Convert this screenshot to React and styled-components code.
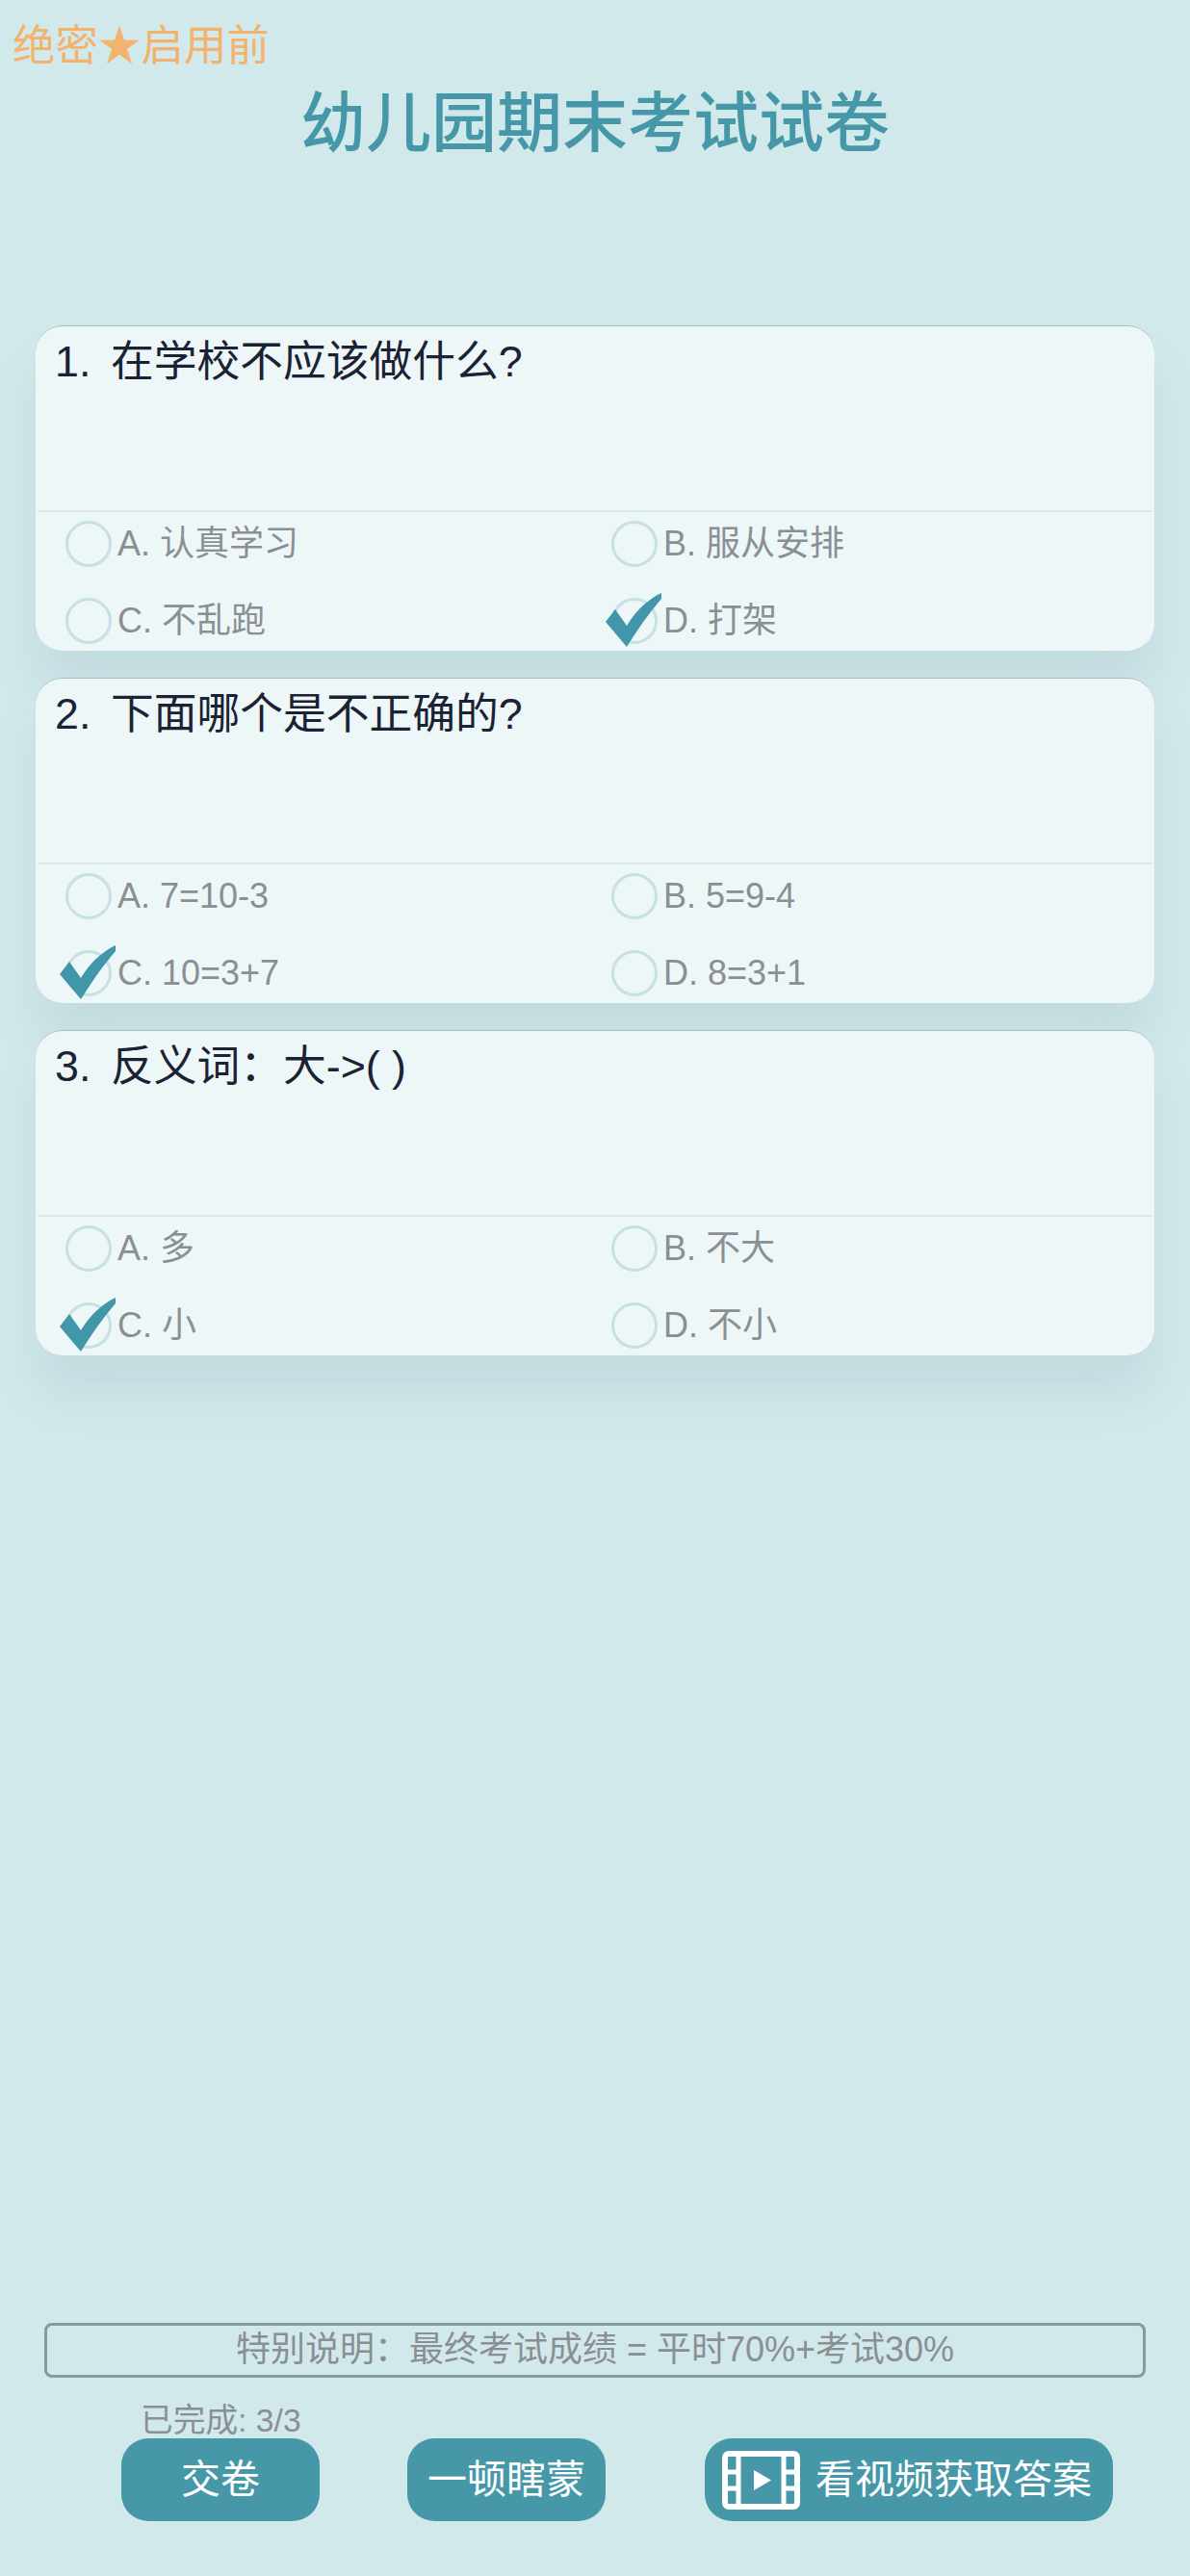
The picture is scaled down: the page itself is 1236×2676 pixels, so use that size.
import React from "react";
import styled, { createGlobalStyle } from "styled-components";

const GlobalStyle = createGlobalStyle`
  html, body {
    margin: 0;
    padding: 0;
    background: #d2e9ec;
  }
  * {
    box-sizing: border-box;
  }
`;

const Page = styled.div`
  width: 1236px;
  height: 2676px;
  display: flex;
  flex-direction: column;
  overflow: hidden;
  background: #d2e9ec;
  font-family: "Liberation Sans", "Noto Sans CJK SC", sans-serif;
`;

const Secret = styled.div`
  height: 44px;
  margin: 26px 0 0 13px;
  font-size: 44.5px;
  line-height: 44px;
  color: #f2b36e;
`;

const Title = styled.h1`
  margin: 16px 0 0;
  height: 84px;
  font-size: 68px;
  line-height: 84px;
  font-weight: 500;
  text-align: center;
  color: #4698a9;
`;

const CardList = styled.div`
  display: flex;
  flex-direction: column;
  gap: 28px;
  margin: 168px 37px 0;
`;

const Card = styled.section`
  height: 338px;
  display: flex;
  flex-direction: column;
  border-radius: 28px;
  border-top: 1px solid #aebfc0;
  background: #eef7f8;
  box-shadow: 0 40px 50px rgba(70, 110, 120, 0.11);
`;

const Question = styled.div`
  height: 193px;
  margin: 0 2px;
  padding: 9px 0 0 18px;
  display: flex;
  font-size: 44.75px;
  line-height: 54px;
  color: #1a2233;
  border-bottom: 2px solid #dde8e9;
`;

const Num = styled.span`
  width: 58px;
  flex: none;
`;

const Options = styled.div`
  display: grid;
  grid-template-columns: 567px 1fr;
  row-gap: 32px;
  padding: 9px 0 0 31px;
`;

const Option = styled.div`
  height: 48px;
  display: flex;
  align-items: center;
  gap: 6px;
  font-size: 36px;
  line-height: 44px;
  color: #8a8f94;
`;

const RadioWrap = styled.span`
  position: relative;
  width: 48px;
  height: 48px;
  flex: none;
`;

const Radio = styled.span`
  display: block;
  width: 48px;
  height: 48px;
  border-radius: 50%;
  border: 3px solid #c6e0e5;
`;

const Tick = styled.svg`
  position: absolute;
  left: -6px;
  top: -5px;
  width: 58px;
  height: 56px;
`;

const Spacer = styled.div`
  flex: 1;
`;

const Note = styled.div`
  height: 57px;
  margin: 0 46px;
  border: 3px solid #8a979c;
  border-radius: 8px;
  font-size: 36px;
  line-height: 50px;
  text-align: center;
  color: #8a8f94;
`;

const Done = styled.div`
  height: 36px;
  margin: 26px 0 0 146px;
  font-size: 33.7px;
  line-height: 36px;
  color: #8a8f94;
`;

const Buttons = styled.div`
  display: flex;
  align-items: center;
  margin: 1px 0 57px 126px;
`;

const Button = styled.button`
  height: 86px;
  width: ${(p) => p.$w}px;
  margin-right: ${(p) => p.$mr || 0}px;
  padding: 0 ${(p) => p.$pr || 0}px 0 0;
  display: flex;
  align-items: center;
  justify-content: center;
  gap: 16px;
  border: none;
  border-radius: 28px;
  background: #4698a9;
  color: #fff;
  font-family: inherit;
  font-size: 41px;
  line-height: 50px;
`;

const QUESTIONS = [
  {
    title: "在学校不应该做什么?",
    answer: 3,
    options: ["A. 认真学习", "B. 服从安排", "C. 不乱跑", "D. 打架"],
  },
  {
    title: "下面哪个是不正确的?",
    answer: 2,
    options: ["A. 7=10-3", "B. 5=9-4", "C. 10=3+7", "D. 8=3+1"],
  },
  {
    title: "反义词：大->( )",
    answer: 2,
    options: ["A. 多", "B. 不大", "C. 小", "D. 不小"],
  },
];

function TickIcon() {
  return (
    <Tick viewBox="0 0 58 56">
      <path d="M0 30 L10 17 L22 34 C31 19 43 7 58 0 L58 6 C45 21 34 37 22 56 Z" fill="#4197a9" />
    </Tick>
  );
}

function VideoIcon() {
  return (
    <svg width="81" height="61" viewBox="0 0 81 61" fill="none">
      <rect x="3" y="3" width="75" height="55" rx="4" stroke="#fff" strokeWidth="6" />
      <path d="M17 3V58M64 3V58M3 22H17M3 39H17M64 22H78M64 39H78" stroke="#fff" strokeWidth="5" />
      <path d="M33 20L51 30.5L33 41Z" fill="#fff" />
    </svg>
  );
}

export default function App() {
  return (
    <Page>
      <GlobalStyle />
      <Secret>绝密★启用前</Secret>
      <Title>幼儿园期末考试试卷</Title>
      <CardList>
        {QUESTIONS.map((q, i) => (
          <Card key={q.title}>
            <Question>
              <Num>{i + 1}.</Num>
              {q.title}
            </Question>
            <Options>
              {q.options.map((o, j) => (
                <Option key={o}>
                  <RadioWrap>
                    <Radio />
                    {q.answer === j && <TickIcon />}
                  </RadioWrap>
                  {o}
                </Option>
              ))}
            </Options>
          </Card>
        ))}
      </CardList>
      <Spacer />
      <Note>特别说明：最终考试成绩 = 平时70%+考试30%</Note>
      <Done>已完成: 3/3</Done>
      <Buttons>
        <Button $w={206} $mr={91}>交卷</Button>
        <Button $w={206} $mr={103}>一顿瞎蒙</Button>
        <Button $w={424} $pr={4}>
          <VideoIcon />
          看视频获取答案
        </Button>
      </Buttons>
    </Page>
  );
}
